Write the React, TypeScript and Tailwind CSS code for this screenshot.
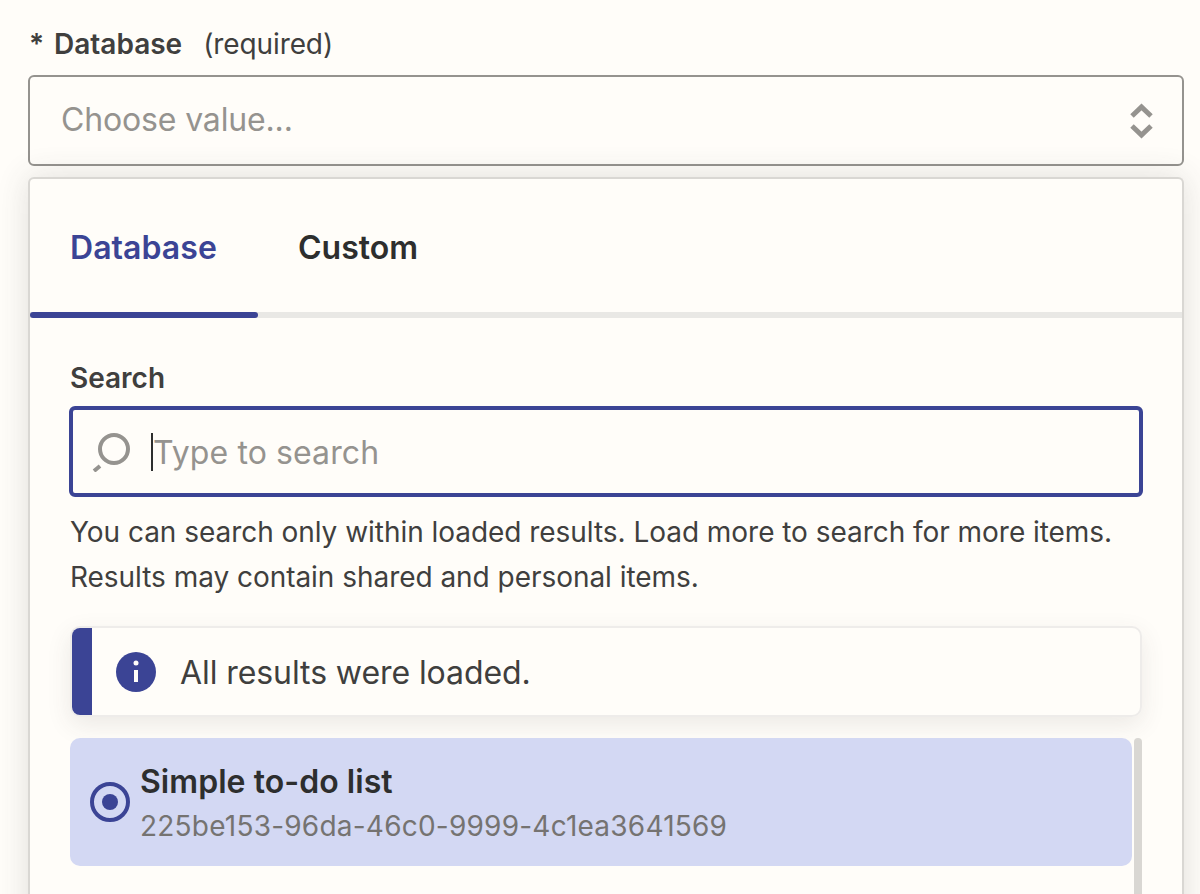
export default function App() {
  return (
    <main
      className="h-[894px] w-[1200px] overflow-hidden bg-[#fffdf9] pl-[28px] pr-[16px] pt-[24px] text-[#403f3e]"
      style={{ fontFamily: "Inter, 'Noto Sans', sans-serif" }}
    >
      {/* Field label */}
      <div className="flex h-[40px] items-center text-[28px] leading-[40px]">
        <span className="w-[26px] pl-[1px] font-semibold">*</span>
        <span className="font-semibold">Database</span>
        <span className="ml-[21px] tracking-[-0.1px]">(required)</span>
      </div>

      {/* Select */}
      <div className="mt-[11px] flex h-[91px] items-center justify-between rounded-[6px] border-2 border-[#95938f] pl-[31px] pr-[29px]">
        <span className="-mt-[2px] text-[32px] tracking-[-0.15px] text-[#95938f]">Choose value...</span>
        <svg width="24" height="36" viewBox="0 0 24 36" fill="none" stroke="#95938f" strokeWidth="5">
          <path d="M3 13 L12.5 4 L22 13" />
          <path d="M3 23 L12.5 32 L22 23" />
        </svg>
      </div>

      {/* Dropdown panel */}
      <div className="mt-[11px] h-[760px] rounded-[6px] border-2 border-b-0 border-[#d9d7d3] bg-[#fffdf9] shadow-[0_0_32px_rgba(64,63,62,0.16)]">
        <div className="flex h-[133px] items-center gap-[81px] pl-[40px] pt-[4px] text-[32px] font-semibold tracking-[0.05px]">
          <span className="text-[#3b4495]">Database</span>
          <span className="text-[#2d2e2e]">Custom</span>
        </div>
        <div className="h-[6px] bg-[#e9e8e5]">
          <div className="h-[6px] w-[228px] rounded-full bg-[#3b4495]" />
        </div>

        <div className="pl-[39px] pr-[39px]">
          <div className="mt-[44px] pl-[1px] text-[28px] font-semibold leading-[32px]">Search</div>

          {/* Search input */}
          <div className="mt-[12px] flex h-[91px] items-center rounded-[6px] border-[4px] border-[#3b4495] pl-[17px]">
            <svg width="40" height="40" viewBox="0 0 40 40" fill="none" stroke="#95938f" strokeWidth="4">
              <circle cx="24" cy="17" r="14" />
              <path d="M10 34 L4 39" />
            </svg>
            <span className="ml-[21px] h-[38px] w-[2px] bg-[#2d2e2e]" />
            <span className="pt-[2px] text-[32px] tracking-[0.1px] text-[#95938f]">Type to search</span>
          </div>

          <p className="mt-[13px] pl-[1px] text-[28px] leading-[45px] tracking-[-0.04px]">
            You can search only within loaded results. Load more to search for more items.
            <br />
            Results may contain shared and personal items.
          </p>

          {/* Alert */}
          <div className="ml-[1px] mr-[1px] mt-[26px] flex h-[91px] items-center overflow-hidden rounded-[10px] border-2 border-[#eeecea] shadow-[0_8px_24px_rgba(64,63,62,0.1)]">
            <div className="h-full w-[20px] bg-[#3b4495]" />
            <svg className="ml-[24px]" width="40" height="40" viewBox="0 0 40 40">
              <circle cx="20" cy="20" r="20" fill="#3b4495" />
              <circle cx="20" cy="11" r="2.5" fill="#fffdf9" />
              <rect x="18" y="18" width="4" height="12" fill="#fffdf9" />
            </svg>
            <span className="ml-[24px] mt-[3px] text-[32px] tracking-[-0.08px]">All results were loaded.</span>
          </div>

          {/* Results list */}
          <div className="ml-[1px] mr-[1px] mt-[21px] flex gap-[2px]">
            <div className="flex h-[128px] flex-1 items-center rounded-[10px] bg-[#d3d8f3] pl-[20px]">
              <svg width="40" height="40" viewBox="0 0 40 40" fill="none">
                <circle cx="20" cy="20" r="18" stroke="#3b4495" strokeWidth="4" />
                <circle cx="20" cy="20" r="8" fill="#3b4495" />
              </svg>
              <div className="ml-[10px] mt-[4px]">
                <div className="text-[32px] font-semibold leading-[44px] tracking-[0.05px] text-[#2d2e2e]">Simple to-do list</div>
                <div className="text-[28px] leading-[44px] tracking-[0.22px] text-[#757371]">225be153-96da-46c0-9999-4c1ea3641569</div>
              </div>
            </div>
            <div className="h-[160px] w-[8px] rounded-full bg-[#d9d7d3]" />
          </div>
        </div>
      </div>
    </main>
  );
}
